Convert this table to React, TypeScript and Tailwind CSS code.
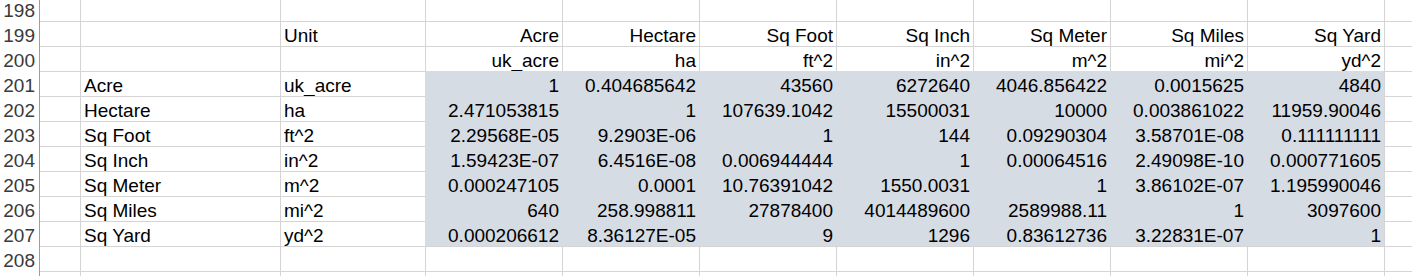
import React from 'react';

const units = ['Acre', 'Hectare', 'Sq Foot', 'Sq Inch', 'Sq Meter', 'Sq Miles', 'Sq Yard'];
const symbols = ['uk_acre', 'ha', 'ft^2', 'in^2', 'm^2', 'mi^2', 'yd^2'];

const values: string[][] = [
  ['1', '0.404685642', '43560', '6272640', '4046.856422', '0.0015625', '4840'],
  ['2.471053815', '1', '107639.1042', '15500031', '10000', '0.003861022', '11959.90046'],
  ['2.29568E-05', '9.2903E-06', '1', '144', '0.09290304', '3.58701E-08', '0.111111111'],
  ['1.59423E-07', '6.4516E-08', '0.006944444', '1', '0.00064516', '2.49098E-10', '0.000771605'],
  ['0.000247105', '0.0001', '10.76391042', '1550.0031', '1', '3.86102E-07', '1.195990046'],
  ['640', '258.998811', '27878400', '4014489600', '2589988.11', '1', '3097600'],
  ['0.000206612', '8.36127E-05', '9', '1296', '0.83612736', '3.22831E-07', '1'],
];

interface RowProps {
  num?: number;
  first?: boolean;
  b?: string;
  c?: string;
  cols?: string[];
  filled?: boolean;
}

function Row({ num, first, b = '', c = '', cols = [], filled }: RowProps) {
  const top = first ? 'h-[21px]' : 'h-[25px] border-t';
  const line = filled ? 'border-[#d6dce4] bg-[#d6dce4]' : 'border-[#d4d4d4]';
  return (
    <div className={`flex shrink-0 ${first ? 'h-[21px]' : 'h-[25px]'}`}>
      <div className="flex w-[40px] shrink-0 items-end justify-end border-r border-[#9e9e9e] bg-white pr-[4px] leading-[21px] text-[#3a3a3a]">
        {num ?? ''}
      </div>
      <div className={`w-[40px] shrink-0 border-[#d4d4d4] ${top}`} />
      <div className={`flex w-[200px] shrink-0 items-end border-l border-[#d4d4d4] pl-[3px] leading-[21px] ${top}`}>
        {b}
      </div>
      <div className={`flex w-[145px] shrink-0 items-end border-l border-[#d4d4d4] pl-[3px] leading-[21px] ${top}`}>
        {c}
      </div>
      {Array.from({ length: 7 }).map((_, i) => (
        <div
          key={i}
          className={`flex w-[137px] shrink-0 items-end justify-end border-l pr-[3px] leading-[21px] ${top} ${line}`}
        >
          {cols[i] ?? ''}
        </div>
      ))}
      <div className={`flex-1 border-l border-[#d4d4d4] ${top}`} />
    </div>
  );
}

export default function App() {
  return (
    <div
      className="flex h-[276px] w-full flex-col overflow-hidden bg-white text-[19px] text-black"
      style={{ fontFamily: '"Liberation Sans", Arial, sans-serif' }}
    >
      <Row num={198} first />
      <Row num={199} c="Unit" cols={units} />
      <Row num={200} cols={symbols} />
      {units.map((u, i) => (
        <Row key={u} num={201 + i} b={u} c={symbols[i]} cols={values[i]} filled />
      ))}
      <Row num={208} />
      {/* next row only peeks in at the bottom edge */}
      <Row />
    </div>
  );
}
